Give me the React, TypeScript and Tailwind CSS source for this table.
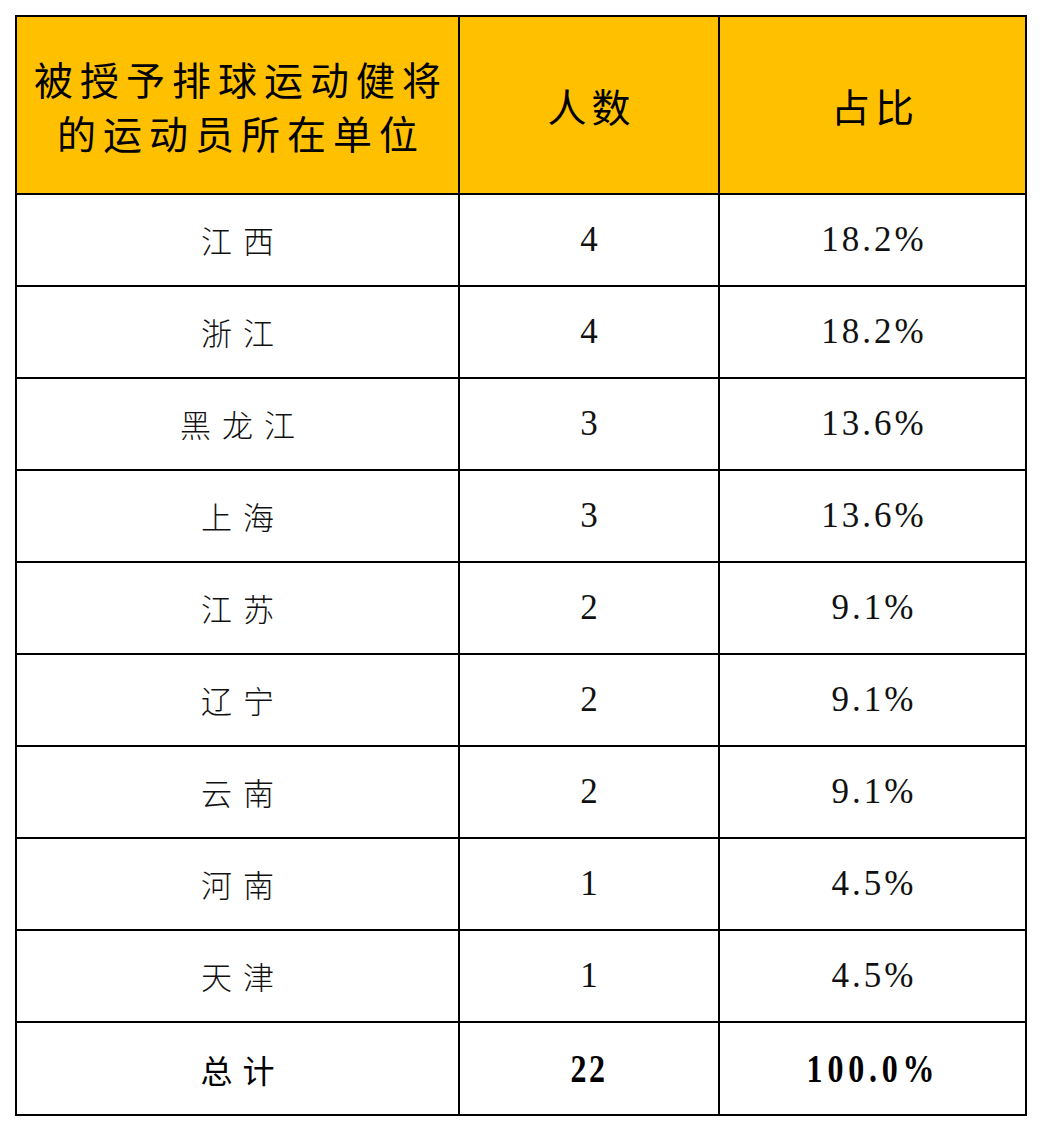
import React from "react";

const rows = [
  { name: "江西", count: "4", pct: "18.2%" },
  { name: "浙江", count: "4", pct: "18.2%" },
  { name: "黑龙江", count: "3", pct: "13.6%" },
  { name: "上海", count: "3", pct: "13.6%" },
  { name: "江苏", count: "2", pct: "9.1%" },
  { name: "辽宁", count: "2", pct: "9.1%" },
  { name: "云南", count: "2", pct: "9.1%" },
  { name: "河南", count: "1", pct: "4.5%" },
  { name: "天津", count: "1", pct: "4.5%" },
];

const cjk = "font-['Noto_Sans_CJK_SC',sans-serif]";
const num = "font-['Liberation_Serif','Noto_Sans_CJK_SC',serif]";

export default function App() {
  return (
    <div className="w-[1040px] h-[1130px] bg-white pt-[15px] pl-[15px]">
      <table className="border-collapse border-2 border-black w-[1010px] table-fixed">
        <colgroup>
          <col className="w-[443px]" />
          <col className="w-[260px]" />
          <col className="w-[307px]" />
        </colgroup>
        <thead>
          <tr className="h-[178px] bg-[#FFC000]">
            <th className={`border-2 border-black font-normal text-black text-[39px] leading-[54px] tracking-[7px] pl-[7px] ${cjk}`}>
              被授予排球运动健将
              <br />
              的运动员所在单位
            </th>
            <th className={`border-2 border-black font-normal text-black text-[39px] tracking-[5px] pl-[5px] ${cjk}`}>
              人数
            </th>
            <th className={`border-2 border-black font-normal text-black text-[39px] tracking-[5px] pl-[5px] ${cjk}`}>
              占比
            </th>
          </tr>
        </thead>
        <tbody>
          {rows.map((r) => (
            <tr key={r.name} className="h-[92px]">
              <td className={`border-2 border-black text-center text-[31px] font-light tracking-[11px] pl-[11px] text-[#111] ${cjk}`}>
                {r.name}
              </td>
              <td className={`border-2 border-black text-center text-[35px] text-[#111] ${num}`}>
                {r.count}
              </td>
              <td className={`border-2 border-black text-center text-[35px] tracking-[3px] pl-[3px] text-[#111] ${num}`}>
                {r.pct}
              </td>
            </tr>
          ))}
          <tr className="h-[93px]">
            <td className={`border-2 border-black text-center text-[32px] font-normal tracking-[10px] pl-[10px] ${cjk}`}>
              总计
            </td>
            <td className={`border-2 border-black text-center text-[40px] font-bold ${num}`}>
              <span className="inline-block scale-x-[0.8] tracking-[3px]">22</span>
            </td>
            <td className={`border-2 border-black text-center text-[40px] font-bold ${num}`}>
              <span className="inline-block scale-x-[0.8] tracking-[6px]">100.0%</span>
            </td>
          </tr>
        </tbody>
      </table>
    </div>
  );
}
